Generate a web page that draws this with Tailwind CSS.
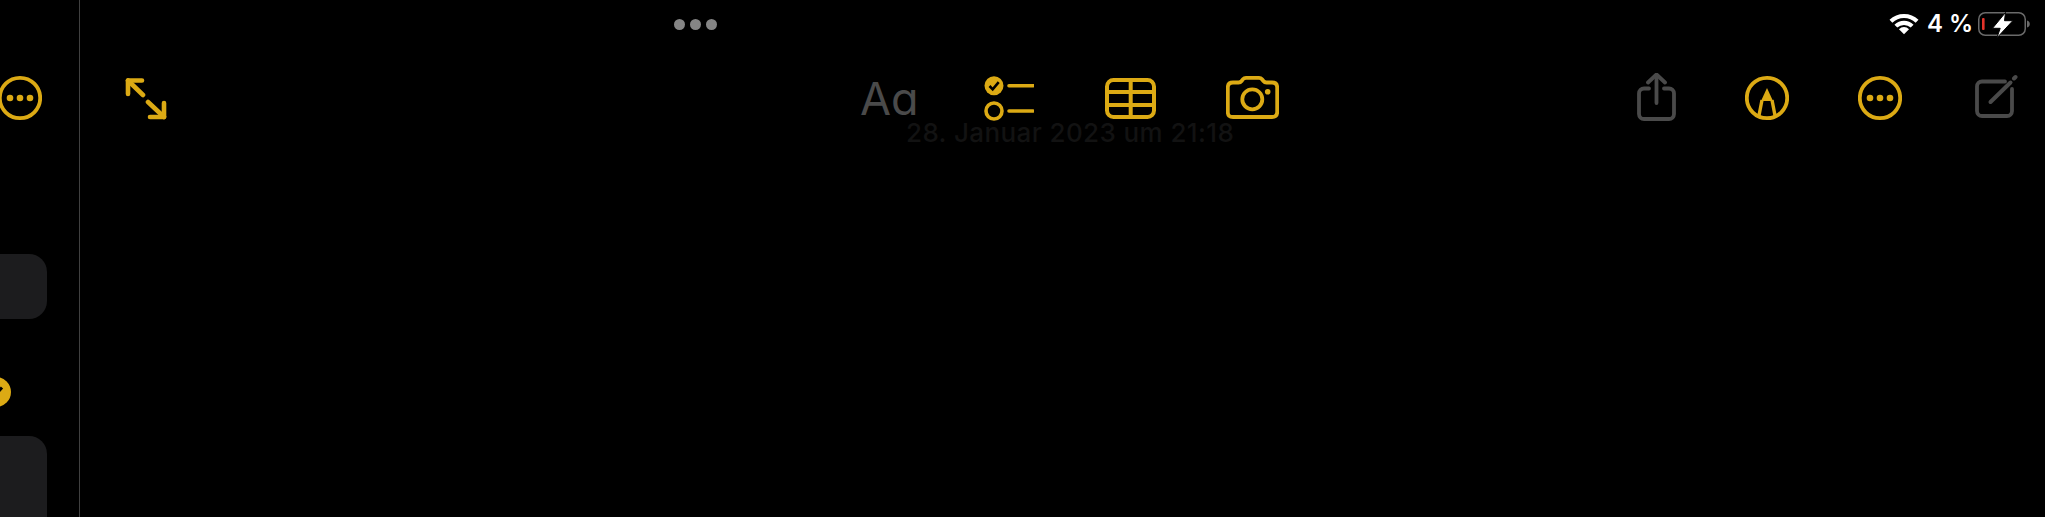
<!DOCTYPE html>
<html lang="de">
<head>
    <meta charset="UTF-8">
    <meta name="viewport" content="width=device-width, initial-scale=1.0">
    <title>Notizen</title>
    <script src="https://cdn.jsdelivr.net/npm/@tailwindcss/browser@4"></script>
</head>
<body class="bg-black font-[Inter,sans-serif] overflow-hidden">
    <div class="flex h-[517px] w-[2045px] overflow-hidden bg-black">

        <!-- sidebar, cut off at the left edge -->
        <aside class="w-[80px] shrink-0 border-r border-[#404040] flex flex-col overflow-hidden pt-[73px]">
            <svg class="ml-[-2px] shrink-0" width="44" height="48" viewBox="0 0 44 48" fill="none">
                <circle cx="22" cy="25" r="20.2" stroke="#dcaa14" stroke-width="3.8"/>
                <circle cx="12" cy="25" r="3.3" fill="#dcaa14"/>
                <circle cx="22" cy="25" r="3.3" fill="#dcaa14"/>
                <circle cx="32" cy="25" r="3.3" fill="#dcaa14"/>
            </svg>
            <div class="w-[47px] h-[65px] mt-[133px] shrink-0 rounded-r-[18px] bg-[#1c1c1e]"></div>
            <svg class="ml-[-19px] mt-[58px] shrink-0" width="30" height="30" viewBox="0 0 30 30">
                <circle cx="15" cy="15" r="15" fill="#dcaa14"/>
                <path d="M9 15.5l4 4 8-9" fill="none" stroke="#000" stroke-width="3"/>
            </svg>
            <div class="w-[47px] mt-[29px] flex-1 rounded-tr-[18px] bg-[#1c1c1e]"></div>
        </aside>

        <main class="flex-1 flex flex-col">
            <!-- status row -->
            <div class="h-[48px] mb-[25px] flex items-center pl-[594px]">
                <div class="flex gap-[5px]">
                    <span class="w-[11px] h-[11px] rounded-full bg-[#858585]"></span>
                    <span class="w-[11px] h-[11px] rounded-full bg-[#858585]"></span>
                    <span class="w-[11px] h-[11px] rounded-full bg-[#858585]"></span>
                </div>
                <svg class="ml-[1172px]" width="30" height="22" viewBox="0 0 28 20" fill="none">
                    <path d="M1.8 7.5A17.5 17.5 0 0 1 26.2 7.5" stroke="#fff" stroke-width="3.8"/>
                    <path d="M6.4 12A11 11 0 0 1 21.6 12" stroke="#fff" stroke-width="3.8"/>
                    <path d="M14 19.5L9.3 14.8A6.6 6.6 0 0 1 18.7 14.8Z" fill="#fff"/>
                </svg>
                <span class="ml-[8px] w-[51px] text-[24px] font-semibold text-white whitespace-nowrap">4 %</span>
                <svg class="overflow-visible" width="54" height="24" viewBox="0 0 54 24" fill="none">
                    <rect x="0.75" y="0.75" width="46.5" height="22.5" rx="6.5" stroke="#6a6a6a" stroke-width="1.5"/>
                    <path d="M49 8.5c1.8.6 2.8 1.8 2.8 3.5s-1 2.9-2.8 3.5z" fill="#6a6a6a"/>
                    <rect x="4" y="6" width="2.6" height="12" rx="1" fill="#e5332a"/>
                    <path d="M27.5 0.5L14.5 16.3H22.2L18.8 26L34.8 8.7H26.5Z" fill="#fff" stroke="#000" stroke-width="1"/>
                </svg>
            </div>

            <!-- toolbar -->
            <div class="h-[48px] flex items-start pl-[45px] shrink-0">
                <svg width="42" height="48" viewBox="0 0 42 48" fill="none" stroke="#dcaa14" stroke-width="4.6" stroke-linecap="round" stroke-linejoin="round">
                    <path d="M17 7.5H3V21"/>
                    <path d="M3 7.5L18 22"/>
                    <path d="M39 30V44H25"/>
                    <path d="M39 44L23 29"/>
                </svg>
                <span class="ml-[693px] w-[58px] text-[45px] leading-[48px] mt-[2px] text-[#4a4a4a] [font-feature-settings:'cv11']">Aa</span>
                <svg class="ml-[66px]" width="50" height="48" viewBox="0 0 50 48" fill="none">
                    <circle cx="10" cy="12.7" r="9.5" fill="#dcaa14"/>
                    <path d="M5.5 13l3.2 3.4 6-7.2" stroke="#000" stroke-width="2.6"/>
                    <circle cx="10" cy="38" r="8" stroke="#dcaa14" stroke-width="3.6"/>
                    <path d="M25 12.7H49M25 38H49" stroke="#dcaa14" stroke-width="3.6" stroke-linecap="round"/>
                </svg>
                <svg class="ml-[71px]" width="51" height="48" viewBox="0 0 51 48" fill="none" stroke="#dcaa14" stroke-width="4">
                    <rect x="2" y="7" width="47" height="37" rx="6.5"/>
                    <path d="M2 19H49M2 32H49M25.7 7V44"/>
                </svg>
                <svg class="ml-[70px]" width="53" height="48" viewBox="0 0 53 48" fill="none">
                    <path d="M7 9.5H12.5C14 9.5 14.8 9 15.6 8L17 6.2C17.8 5.2 18.6 4.8 20 4.8H33C34.4 4.8 35.2 5.2 36 6.2L37.4 8C38.2 9 39 9.5 40.5 9.5H46C49.5 9.5 51.2 11.4 51.2 14.5V39C51.2 42.5 49.5 44 46 44H7C3.5 44 1.8 42.5 1.8 39V14.5C1.8 11.4 3.5 9.5 7 9.5Z" stroke="#dcaa14" stroke-width="3.8"/>
                    <circle cx="26.3" cy="26.3" r="10" stroke="#dcaa14" stroke-width="3.8"/>
                    <circle cx="41.7" cy="18.7" r="2.8" fill="#dcaa14"/>
                </svg>
                <svg class="ml-[358px]" width="39" height="48" viewBox="0 0 39 48" fill="none" stroke="#4a4a4a" stroke-width="3.8" stroke-linecap="round" stroke-linejoin="round">
                    <path d="M12 15.5H7a5 5 0 0 0-5 5V41a5 5 0 0 0 5 5H32a5 5 0 0 0 5-5V20.5a5 5 0 0 0-5-5H27"/>
                    <path d="M19.5 30V2"/>
                    <path d="M11 9.5L19.5 1.5L28 9.5"/>
                </svg>
                <svg class="ml-[69px]" width="44" height="48" viewBox="0 0 44 48" fill="none">
                    <circle cx="22" cy="25" r="20.2" stroke="#dcaa14" stroke-width="3.8"/>
                    <path d="M22 15L16 28H28Z" fill="#dcaa14"/>
                    <path d="M17 27L13.8 43.5M27 27L30.2 43.5" stroke="#dcaa14" stroke-width="3.4"/>
                </svg>
                <svg class="ml-[69px]" width="44" height="48" viewBox="0 0 44 48" fill="none">
                    <circle cx="22" cy="25" r="20.2" stroke="#dcaa14" stroke-width="3.8"/>
                    <circle cx="12" cy="25" r="3.3" fill="#dcaa14"/>
                    <circle cx="22" cy="25" r="3.3" fill="#dcaa14"/>
                    <circle cx="32" cy="25" r="3.3" fill="#dcaa14"/>
                </svg>
                <svg class="ml-[73px]" width="43" height="48" viewBox="0 0 43 48" fill="none" stroke="#4a4a4a" stroke-linecap="round">
                    <path d="M30 8.5H7a5 5 0 0 0-5 5V38a5 5 0 0 0 5 5H32a5 5 0 0 0 5-5V16" stroke-width="3.8"/>
                    <path d="M15.5 29L35.5 9.5" stroke-width="4"/>
                    <path d="M39 5.5L40.5 4" stroke-width="4"/>
                </svg>
            </div>

            <!-- date shows faintly below the toolbar -->
            <p class="mt-[-3px] pl-[826px] text-[26px] font-medium leading-[30px] tracking-[0.4px] text-[#121212] whitespace-nowrap">28. Januar 2023 um 21:18</p>
        </main>
    </div>
</body>
</html>
